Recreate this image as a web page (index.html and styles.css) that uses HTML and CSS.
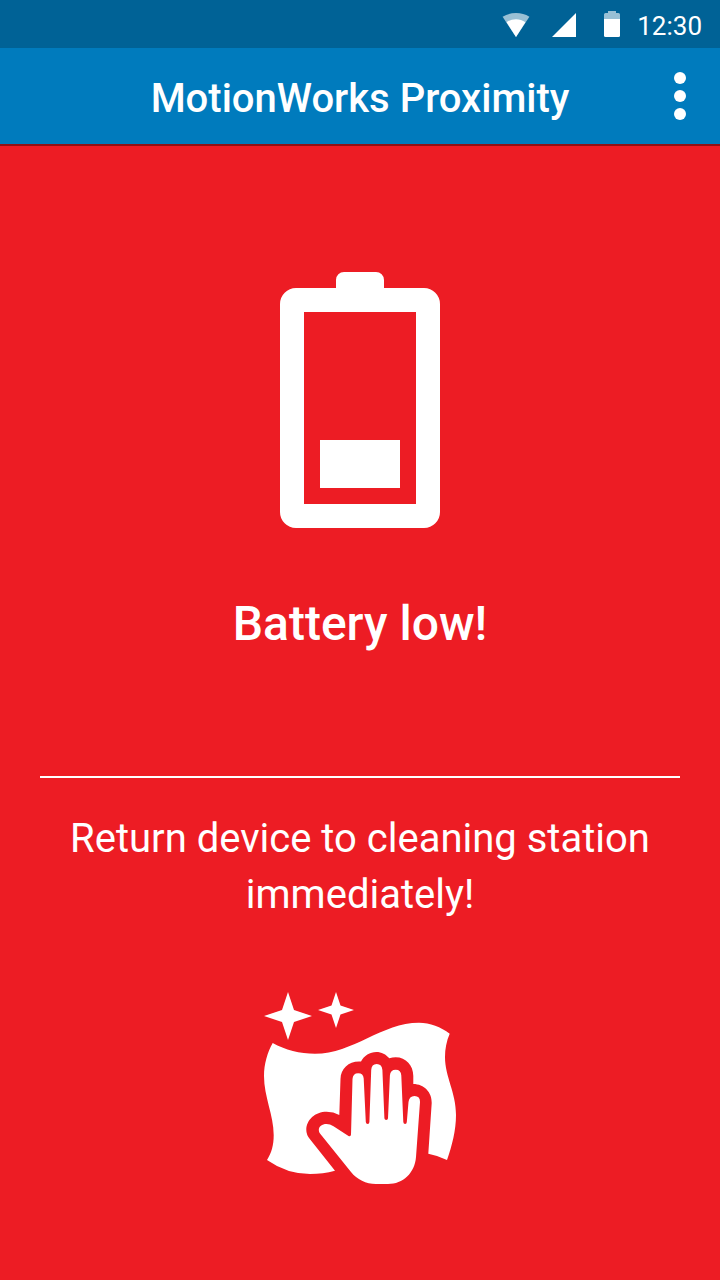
FILE: index.html
```html
<!DOCTYPE html>
<html lang="en">
<head>
    <meta charset="UTF-8">
    <meta name="viewport" content="width=device-width, initial-scale=1.0">
    <title>MotionWorks Proximity</title>
    <link rel="stylesheet" href="styles.css">
</head>
<body>

<div class="status-bar">
    <svg class="wifi" width="28" height="24" viewBox="0 0 28 24">
        <path fill="#99c0d5" d="M.6 3.8C4.600 1.200 9.100 0 14 0s9.400 1.200 13.400 3.800L14 24z"/>
        <path fill="#fff" d="M4.600 9.300C7.400 7.200 10.600 6.200 14 6.200s6.600 1 9.400 3.100L14 24z"/>
    </svg>
    <svg class="signal" width="24" height="24" viewBox="0 0 24 24">
        <path fill="#fff" d="M0 24 24 0v24z"/>
    </svg>
    <svg class="charge" width="16" height="26" viewBox="0 0 16 26">
        <path fill="#99c0d5" d="M0 8V3.500Q0 2 1.500 2H4V0h8v2h2.500Q16 2 16 3.500V8z"/>
        <path fill="#fff" d="M0 8h16v16.500q0 1.500-1.500 1.500h-13Q0 26 0 24.500z"/>
    </svg>
    <span class="time">12:30</span>
</div>

<header class="toolbar">
    <h1>MotionWorks Proximity</h1>
    <button class="menu-btn" aria-label="Menu">
        <span></span>
        <span></span>
        <span></span>
    </button>
</header>

<main class="alert">
    <svg class="battery" width="160" height="256" viewBox="0 0 160 256">
        <path fill="#fff" fill-rule="evenodd" d="M56 16V8a8 8 0 0 1 8-8h32a8 8 0 0 1 8 8v8h40a16 16 0 0 1 16 16v208a16 16 0 0 1-16 16H16a16 16 0 0 1-16-16V32a16 16 0 0 1 16-16zM24 40v192h112V40z"/>
        <path fill="#fff" d="M40 168h80v48H40z"/>
    </svg>
    <h2>Battery low!</h2>

    <p class="message">Return device to cleaning station immediately!</p>

    <svg class="cleaning" width="192" height="192" viewBox="0 0 192 192" fill="#fff">
        <!-- sparkles -->
        <path d="M24 0l6 18 18 6-18 6-6 18-6-18-18-6 18-6z"/>
        <path d="M72 0l4.500 13.500L90 18l-13.500 4.500L72 36l-4.500-13.500L54 18l13.500-4.500z"/>
        <!-- cloth -->
        <path d="M8.700 51C21 58 36 61.700 51 61.700C89 61.700 118 30.700 155 30.700C166 30.700 177 35 185.700 41.700C182.500 49 181 57 181 65C181 85 192 100 192 123C192 138 188 154 183 168Q174 163.500 164.300 161.700L167.700 111C168.200 100.500 160 92 149.300 92V84C149.300 73.500 142 65.300 131.700 65.300Q128.500 65.300 125.300 66.300C122 62.300 117.500 59.900 112.300 59.900C106 59.900 100 63.500 97 69.500C85.500 68.500 76.700 76 76.500 87L75.300 123Q69.500 119.800 62.700 119.800C51 119.800 42.300 128 42.300 138Q42.300 143 46 147.300L71 178.700Q59 182 46 182Q23 182 3 168C7.500 161 9.700 153 9.700 143C9.700 123 0 105 0 84C0 72 3.500 60 8.700 51z"/>
        <!-- hand -->
        <path d="M54.800 138C54.800 134.500 58 132 62.500 132Q66 132 69.500 134.300L84.500 144.100Q86.900 144.900 87 142.500L88.500 87Q88.900 81.300 94.200 81.300Q99.300 81.300 99.700 86.500L101.800 130Q102 132 103.700 132Q105.300 132 105.400 130L107.200 78Q107.500 72 112.700 72Q118 72 118.400 78L120.400 126.200Q120.600 128 122.200 128Q123.900 128 124 126.200L125.900 83.500Q126.300 77.800 131.700 77.800Q137 77.800 137.300 83.500L139.300 130Q139.500 132 141.100 132Q142.700 132 142.800 130L144.500 110Q145.200 104 150.500 104Q156.200 104 156 110L152 165C150.800 181 139 192 124 192H112C102 192 93 187.500 87 180L56 141.500Q54.800 140 54.800 138z"/>
    </svg>
</main>

</body>
</html>
```
FILE: styles.css
```css
body {
    font-family: Roboto, sans-serif;
    margin: 0;
    min-height: 100vh;
    display: flex;
    flex-direction: column;
    background-color: #ed1c24;
    color: #fff;
}

h1, h2, p {
    margin: 0;
}

svg {
    display: block;
    flex: none;
}

.status-bar {
    height: 48px;
    box-sizing: border-box;
    padding: 11px 18px 0 0;
    display: flex;
    justify-content: flex-end;
    align-items: flex-start;
    background-color: #006296;
}

.wifi, .signal {
    margin-top: 2px;
}

.signal {
    margin-left: 22px;
}

.charge {
    margin-left: 28px;
}

.time {
    margin-left: 17px;
    font-size: 26px;
    line-height: 30px;
}

.toolbar {
    height: 96px;
    display: grid;
    grid-template-columns: 80px 1fr 80px;
    align-items: center;
    background-color: #007bbd;
}

.toolbar h1 {
    grid-column: 2;
    padding-top: 6px;
    font-size: 40px;
    font-weight: 500;
    line-height: 48px;
    text-align: center;
}

.menu-btn {
    display: flex;
    flex-direction: column;
    align-items: center;
    gap: 6px;
    padding: 0;
    border: none;
    background: none;
    cursor: pointer;
}

.menu-btn span {
    width: 12px;
    height: 12px;
    border-radius: 50%;
    background-color: #fff;
}

.alert {
    flex: 1;
    display: flex;
    flex-direction: column;
    align-items: center;
    padding: 126px 40px 0;
    border-top: 2px solid #8f1116;
}

.alert h2 {
    margin-top: 68px;
    font-size: 48px;
    font-weight: 500;
    line-height: 56px;
}

.message {
    width: 100%;
    box-sizing: border-box;
    margin-top: 124px;
    padding-top: 33px;
    border-top: 2px solid #fff;
    font-size: 40px;
    line-height: 56px;
    text-align: center;
}

.cleaning {
    margin-top: 69px;
}
```
